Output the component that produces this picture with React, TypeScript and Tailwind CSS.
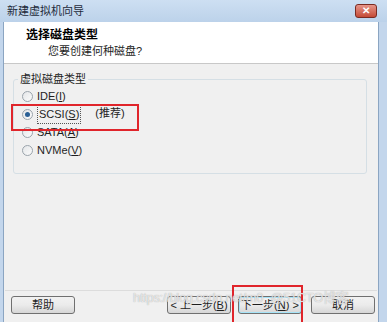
const font = "font-['Liberation_Sans','Noto_Sans_CJK_SC',sans-serif]";

function Radio({ label, checked }: { label: React.ReactNode; checked?: boolean }) {
  return (
    <div className="flex items-center h-[18px]">
      <span className="w-[11px] h-[11px] rounded-full border border-[#9aa3ab] bg-gradient-to-br from-[#e4e6e8] to-[#fbfbfb] flex items-center justify-center">
        {checked && <span className="w-[5px] h-[5px] rounded-full bg-[#2a5f95]" />}
      </span>
      <span className="ml-[4px] text-[11px] text-[#1e1e1e]">{label}</span>
    </div>
  );
}

function Btn({ children, className = "" }: { children: React.ReactNode; className?: string }) {
  return (
    <button
      className={`h-[18px] w-[64px] rounded-[3px] border border-[#707070] bg-gradient-to-b from-[#f2f2f2] via-[#ebebeb] to-[#d6d6d6] text-[11px] text-[#1e1e1e] flex items-center justify-center ${className}`}
    >
      {children}
    </button>
  );
}

export default function App() {
  return (
    <div className={`w-[387px] h-[322px] flex flex-col bg-[#c3d6ec] overflow-hidden relative ${font}`}>
      {/* title bar */}
      <div className="h-[22px] flex items-center justify-between pl-[7px] pr-[10px] bg-gradient-to-b from-[#cddff2] to-[#bcd2ea]">
        <span className="text-[11px] text-[#1e2a3a]">新建虚拟机向导</span>
        <span className="w-[22px] h-[14px] rounded-[3px] border border-[#7a2b22] bg-gradient-to-b from-[#e6958a] to-[#c44a36] flex items-center justify-center text-white text-[10px] font-bold leading-none">
          ✕
        </span>
      </div>

      <div className="flex-1 flex flex-col ml-[3px] mr-[8px] border-l border-r border-[#8ba5c2]">
        {/* header */}
        <div className="h-[42px] bg-white border-b border-[#c8c8c8] pl-[22px] pt-[5px]">
          <div className="text-[12px] font-bold text-black leading-[16px]">选择磁盘类型</div>
          <div className="text-[11px] text-[#1e1e1e] leading-[16px] pl-[22px]">您要创建何种磁盘?</div>
        </div>

        {/* body */}
        <div className="flex-1 flex flex-col bg-[#f0f0f0]">
          <fieldset className="mt-[7px] ml-[9px] mr-[11px] h-[103px] border border-[#d5dfe5] rounded-[3px] pl-[8px] pt-[0px]">
            <legend className="text-[11px] text-[#1e1e1e] px-[2px] -ml-[4px]">虚拟磁盘类型</legend>
            <Radio label={<>IDE(<u>I</u>)</>} />
            <Radio
              checked
              label={
                <span className="flex">
                  <span className="border border-dotted border-[#555] px-[1px]">SCSI(<u>S</u>)</span>
                  <span className="ml-[14px]">(推荐)</span>
                </span>
              }
            />
            <Radio label={<>SATA(<u>A</u>)</>} />
            <Radio label={<>NVMe(<u>V</u>)</>} />
          </fieldset>

          <div className="flex-1" />

          <div className="border-t border-[#dcdcdc] mx-[1px]" />
          <div className="h-[31px] flex items-center pl-[7px] pr-[3px] pb-[3px]">
            <Btn>帮助</Btn>
            <div className="flex-1" />
            <Btn>&lt; 上一步(<u>B</u>)</Btn>
            <Btn className="ml-[7px] border-[#3c7fb1] shadow-[inset_0_0_0_1px_#a6e4f8]">下一步(<u>N</u>) &gt;</Btn>
            <Btn className="ml-[9px]">取消</Btn>
          </div>
        </div>
      </div>

      {/* annotation overlays */}
      <div className="absolute left-[11px] top-[104px] w-[128px] h-[27px] border-2 border-[#e0252b]" />
      <div className="absolute left-[232px] top-[285px] w-[71px] h-[40px] border-2 border-[#e0252b]" />
      <div className="absolute left-[133px] top-[288px] text-[13px] text-white/70 tracking-tight whitespace-nowrap [text-shadow:0_0_1px_#999]">
        https://blog.csdn.net/m0_@51CTO博客
      </div>
    </div>
  );
}
